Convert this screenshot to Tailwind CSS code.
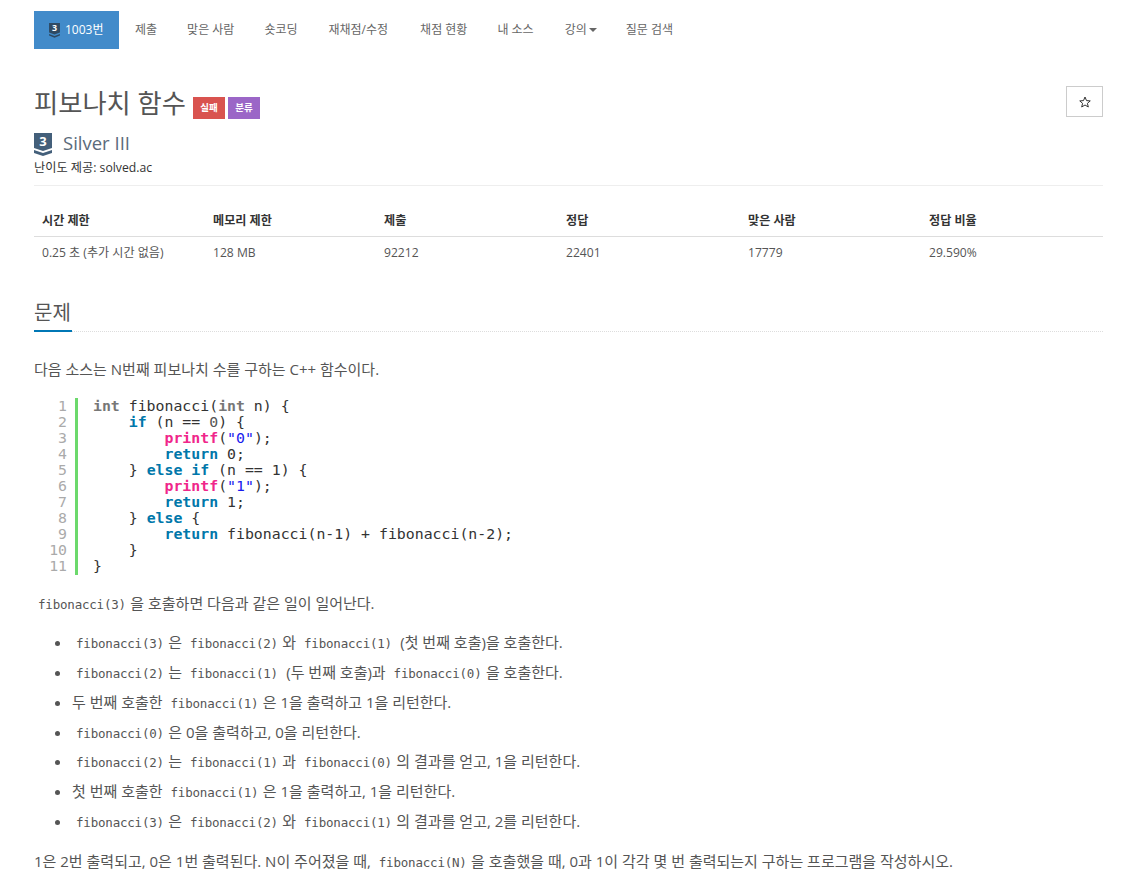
<!DOCTYPE html>
<html lang="ko">
<head>
  <meta charset="UTF-8" />
  <title>1003번: 피보나치 함수</title>
  <script src="https://cdn.jsdelivr.net/npm/@tailwindcss/browser@4"></script>
</head>
<body class="bg-white text-[#555] text-[15px] font-['Open_Sans','Noto_Sans_CJK_KR',sans-serif] overflow-hidden">
  <div class="pl-[34px] pr-[22px] pt-[11px] h-[889px]">

    <!-- 메뉴 -->
    <nav class="flex h-[38px] text-[12px] leading-[38px] text-[#666]">
      <a class="flex items-center gap-[4px] bg-[#428bca] text-white pl-[14px] w-[85px]">
        <svg width="13" height="15" viewBox="0 0 18 22">
          <path d="M1 0h16v14l-8 3-8-3z" fill="#2f4a63"/>
          <path d="M1 16l8 3 8-3v2.500l-8 3-8-3z" fill="#2f4a63"/>
          <text x="9" y="12" text-anchor="middle" font-size="13" font-weight="700" fill="#fff" font-family="Open Sans">3</text>
        </svg>
        1003번
      </a>
      <a class="pl-[16px] pr-[15px]">제출</a>
      <a class="px-[15px]">맞은 사람</a>
      <a class="pl-[15px] pr-[16px]">숏코딩</a>
      <a class="pl-[15px] pr-[16px]">재채점/수정</a>
      <a class="pl-[16px] pr-[14px]">채점 현황</a>
      <a class="pl-[16px] pr-[15px]">내 소스</a>
      <a class="flex items-center pl-[16px] pr-[13px]">강의<span class="ml-[2px] w-0 h-0 border-x-[4px] border-x-transparent border-t-[4px] border-t-[#666]"></span></a>
      <a class="pl-[16px] pr-[15px]">질문 검색</a>
    </nav>

    <!-- 제목 -->
    <div class="flex justify-between mt-[37px] h-[31px]">
      <div class="flex items-center">
        <h1 class="mt-[4px] text-[26.3px] leading-[31px] font-normal text-[#555]">피보나치 함수</h1>
        <span class="ml-[7px] mt-[13px] w-[32px] h-[22px] bg-[#d9534f] text-white text-[9.5px] font-bold flex items-center justify-center">실패</span>
        <span class="ml-[3px] mt-[13px] w-[32px] h-[22px] bg-[#9b66c7] text-white text-[9.5px] font-bold flex items-center justify-center">분류</span>
      </div>
      <button class="w-[37px] h-[31px] border border-[#ccc] flex items-center justify-center">
        <svg width="12" height="12" viewBox="0 0 24 24" fill="none" stroke="#333" stroke-width="2">
          <path d="M12 2l3 7.200 7.500.6-5.700 4.900 1.800 7.300-6.600-4-6.600 4 1.800-7.300-5.700-4.900 7.500-.6z"/>
        </svg>
      </button>
    </div>

    <div class="flex items-center gap-[11px] mt-[14px] h-[24px]">
      <svg class="mt-[2px]" width="18" height="23" viewBox="0 0 18 23">
        <path d="M0 0h18v15l-9 3-9-3z" fill="#435f7a"/>
        <path d="M0 17l9 3 9-3v3l-9 3-9-3z" fill="#435f7a"/>
        <text x="9" y="13" text-anchor="middle" font-size="13" font-weight="700" fill="#fff" font-family="Open Sans">3</text>
      </svg>
      <span class="text-[18.5px] text-[#5a6a7a]">Silver III</span>
    </div>
    <div class="mt-[4px] text-[12.2px] leading-[17px] text-[#333] pb-[9px] border-b border-[#eee]">난이도 제공: solved.ac</div>

    <!-- 정보 표 -->
    <table class="mt-[19px] w-full text-[12.1px] table-fixed border-collapse">
      <thead>
        <tr class="h-[31px] border-b border-[#ddd] text-[#333]">
          <th class="w-[171px] px-[8px] pt-[2px] text-left font-bold">시간 제한</th>
          <th class="w-[171px] px-[8px] pt-[2px] text-left font-bold">메모리 제한</th>
          <th class="w-[182px] px-[8px] pt-[2px] text-left font-bold">제출</th>
          <th class="w-[182px] px-[8px] pt-[2px] text-left font-bold">정답</th>
          <th class="w-[181px] px-[8px] pt-[2px] text-left font-bold">맞은 사람</th>
          <th class="px-[8px] pt-[2px] text-left font-bold">정답 비율</th>
        </tr>
      </thead>
      <tbody>
        <tr class="h-[33px]">
          <td class="px-[8px]">0.25 초 (추가 시간 없음)</td>
          <td class="px-[8px]">128 MB</td>
          <td class="px-[8px]">92212</td>
          <td class="px-[8px]">22401</td>
          <td class="px-[8px]">17779</td>
          <td class="px-[8px]">29.590%</td>
        </tr>
      </tbody>
    </table>

    <!-- 문제 -->
    <div class="mt-[16px] border-b border-dotted border-[#ddd] h-[47px] flex">
      <h2 class="text-[20px] leading-[27px] h-[47px] border-b-2 border-[#0077b5] w-[38px] font-normal whitespace-nowrap pt-[14px] box-border">문제</h2>
    </div>

    <p class="mt-[27px] leading-[20px]">다음 소스는 N번째 피보나치 수를 구하는 C++ 함수이다.</p>

    <!-- 코드 -->
    <div class="mt-[19px] flex font-['DejaVu_Sans_Mono',monospace] text-[14.85px] leading-[16px] h-[177px] pl-[8px]">
      <pre class="w-[25px] text-right text-[#aaa] font-['DejaVu_Sans_Mono',monospace]">1
2
3
4
5
6
7
8
9
10
11</pre>
      <div class="w-[3px] bg-[#6cd96c] ml-[8px] mr-[15px]"></div>
      <pre class="text-[#333] font-['DejaVu_Sans_Mono',monospace]"><b class="text-[#777]">int</b> fibonacci(<b class="text-[#777]">int</b> n) {
    <b class="text-[#07a]">if</b> (n == <span class="text-[#555]">0</span>) {
        <b class="text-[#f0268a]">printf</b>(<span class="text-[#1a1aee]">"0"</span>);
        <b class="text-[#07a]">return</b> 0;
    } <b class="text-[#07a]">else if</b> (n == 1) {
        <b class="text-[#f0268a]">printf</b>(<span class="text-[#1a1aee]">"1"</span>);
        <b class="text-[#07a]">return</b> 1;
    } <b class="text-[#07a]">else</b> {
        <b class="text-[#07a]">return</b> fibonacci(n-1) + fibonacci(n-2);
    }
}</pre>
    </div>

    <p class="mt-[18px] h-[20px] leading-[20px] whitespace-nowrap"><code class="font-['DejaVu_Sans_Mono',monospace] text-[12.5px] tracking-[-0.2px] pl-[4px] pr-[0.5px]">fibonacci(3)</code> 을 호출하면 다음과 같은 일이 일어난다.</p>

    <ul class="mt-[19px] list-disc pl-[38px] leading-[20px] marker:text-[#555]">
      <li class="h-[20px] mb-[9.85px]"><code class="font-['DejaVu_Sans_Mono',monospace] text-[12.5px] tracking-[-0.2px] pl-[4px] pr-[0.5px]">fibonacci(3)</code> 은 <code class="font-['DejaVu_Sans_Mono',monospace] text-[12.5px] tracking-[-0.2px] pl-[4px] pr-[0.5px]">fibonacci(2)</code> 와 <code class="font-['DejaVu_Sans_Mono',monospace] text-[12.5px] tracking-[-0.2px] pl-[4px] pr-[0.5px]">fibonacci(1)</code> &nbsp;(첫 번째 호출)을 호출한다.</li>
      <li class="h-[20px] mb-[9.85px]"><code class="font-['DejaVu_Sans_Mono',monospace] text-[12.5px] tracking-[-0.2px] pl-[4px] pr-[0.5px]">fibonacci(2)</code> 는 <code class="font-['DejaVu_Sans_Mono',monospace] text-[12.5px] tracking-[-0.2px] pl-[4px] pr-[0.5px]">fibonacci(1)</code> &nbsp;(두 번째 호출)과 <code class="font-['DejaVu_Sans_Mono',monospace] text-[12.5px] tracking-[-0.2px] pl-[4px] pr-[0.5px]">fibonacci(0)</code> 을 호출한다.</li>
      <li class="h-[20px] mb-[9.85px]">두 번째 호출한 <code class="font-['DejaVu_Sans_Mono',monospace] text-[12.5px] tracking-[-0.2px] pl-[4px] pr-[0.5px]">fibonacci(1)</code> 은 1을 출력하고 1을 리턴한다.</li>
      <li class="h-[20px] mb-[9.85px]"><code class="font-['DejaVu_Sans_Mono',monospace] text-[12.5px] tracking-[-0.2px] pl-[4px] pr-[0.5px]">fibonacci(0)</code> 은 0을 출력하고, 0을 리턴한다.</li>
      <li class="h-[20px] mb-[9.85px]"><code class="font-['DejaVu_Sans_Mono',monospace] text-[12.5px] tracking-[-0.2px] pl-[4px] pr-[0.5px]">fibonacci(2)</code> 는 <code class="font-['DejaVu_Sans_Mono',monospace] text-[12.5px] tracking-[-0.2px] pl-[4px] pr-[0.5px]">fibonacci(1)</code> 과 <code class="font-['DejaVu_Sans_Mono',monospace] text-[12.5px] tracking-[-0.2px] pl-[4px] pr-[0.5px]">fibonacci(0)</code> 의 결과를 얻고, 1을 리턴한다.</li>
      <li class="h-[20px] mb-[9.85px]">첫 번째 호출한 <code class="font-['DejaVu_Sans_Mono',monospace] text-[12.5px] tracking-[-0.2px] pl-[4px] pr-[0.5px]">fibonacci(1)</code> 은 1을 출력하고, 1을 리턴한다.</li>
      <li class="h-[20px] mb-[9.85px]"><code class="font-['DejaVu_Sans_Mono',monospace] text-[12.5px] tracking-[-0.2px] pl-[4px] pr-[0.5px]">fibonacci(3)</code> 은 <code class="font-['DejaVu_Sans_Mono',monospace] text-[12.5px] tracking-[-0.2px] pl-[4px] pr-[0.5px]">fibonacci(2)</code> 와 <code class="font-['DejaVu_Sans_Mono',monospace] text-[12.5px] tracking-[-0.2px] pl-[4px] pr-[0.5px]">fibonacci(1)</code> 의 결과를 얻고, 2를 리턴한다.</li>
    </ul>

    <p class="mt-[20px] leading-[20px] whitespace-nowrap">1은 2번 출력되고, 0은 1번 출력된다. N이 주어졌을 때, <code class="font-['DejaVu_Sans_Mono',monospace] text-[12.5px] tracking-[-0.2px] pl-[4px] pr-[0.5px]">fibonacci(N)</code> 을 호출했을 때, 0과 1이 각각 몇 번 출력되는지 구하는 프로그램을 작성하시오.</p>
  </div>
</body>
</html>
